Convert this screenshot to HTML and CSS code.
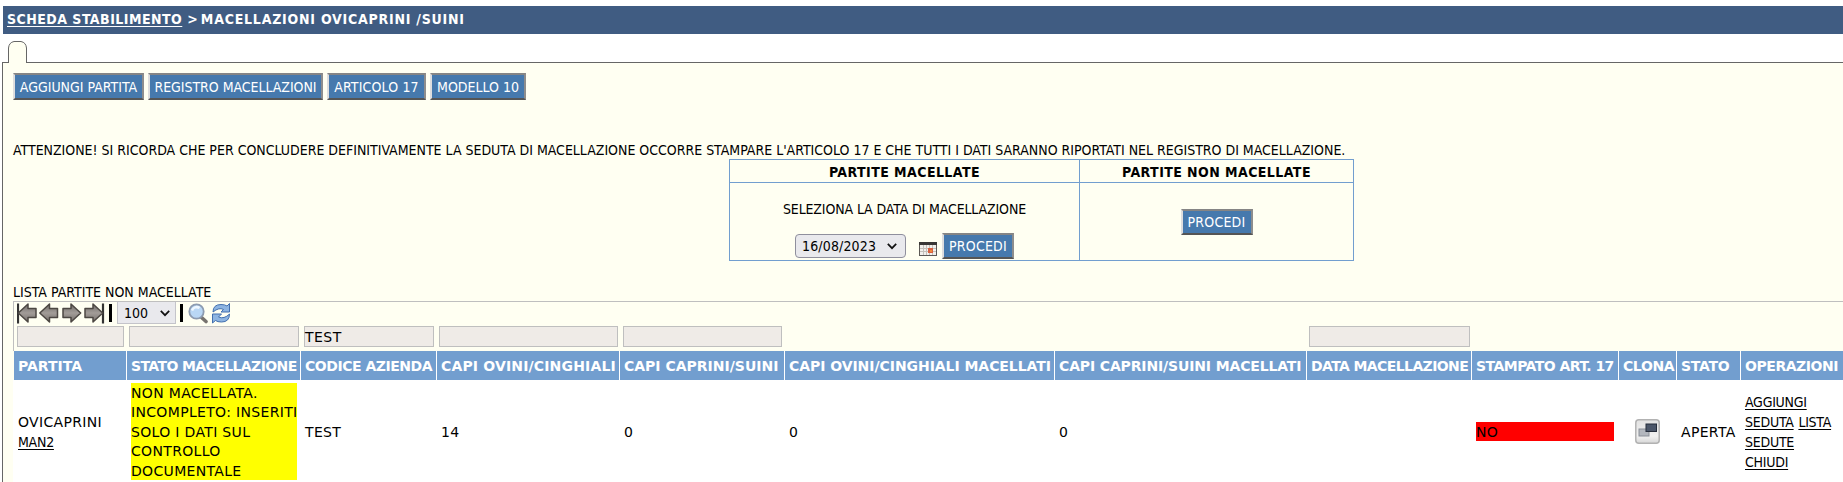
FILE: index.html
```html
<!DOCTYPE html>
<html lang="it">
<head>
<meta charset="utf-8">
<title>Macellazioni ovicaprini / suini</title>
<link rel="stylesheet" href="styles.css">
</head>
<body>
<header class="trail"><a class="trail-link" href="#">SCHEDA STABILIMENTO</a><span class="trail-sep">&gt;</span><span class="trail-here">MACELLAZIONI OVICAPRINI /SUINI</span></header>
<div class="tabs"><svg width="22" height="22" viewBox="0 0 22 22"><path d="M1.500 22V7Q2 1.500 7 .5H14Q19 1.500 19.500 7V22" fill="#fffff2" stroke="#666"/></svg></div>
<main class="panel">
  <div class="actions">
    <button class="btn w1">AGGIUNGI PARTITA</button>
    <button class="btn w2">REGISTRO MACELLAZIONI</button>
    <button class="btn w3">ARTICOLO 17</button>
    <button class="btn w4">MODELLO 10</button>
  </div>
  <p class="warning">ATTENZIONE! SI RICORDA CHE PER CONCLUDERE DEFINITIVAMENTE LA SEDUTA DI MACELLAZIONE OCCORRE STAMPARE L'ARTICOLO 17 E CHE TUTTI I DATI SARANNO RIPORTATI NEL REGISTRO DI MACELLAZIONE.</p>
  <section class="choice">
    <div class="choice-head">PARTITE MACELLATE</div>
    <div class="choice-head">PARTITE NON MACELLATE</div>
    <div class="choice-cell">
      <div class="label">SELEZIONA LA DATA DI MACELLAZIONE</div>
      <div class="date-row">
        <div class="select date">16/08/2023<svg width="10" height="7" viewBox="0 0 10 7"><path d="M.8.8 5 5.200 9.200.8" fill="none" stroke="#111" stroke-width="1.700"/></svg></div>
        <svg class="cal" width="18" height="14" viewBox="0 0 18 14"><rect x=".5" y=".5" width="17" height="13" fill="#f2f0ec" stroke="#5b5855"/><path d="M0 0h18v3H0z" fill="#393735"/><path d="M4.500 3v10M7.500 3v10M10.500 3v10M13.500 3v10M1 6.500h16M1 9.500h16" stroke="#c4c0ba"/><path d="M9 6h5v5H9z" fill="#d9603f"/><path d="M11 8h2v2h-2z" fill="#f08a3a"/></svg>
        <button class="btn go">PROCEDI</button>
      </div>
    </div>
    <div class="choice-cell right"><button class="btn go">PROCEDI</button></div>
  </section>
  <h2 class="list-title">LISTA PARTITE NON MACELLATE</h2>
  <section class="list">
    <div class="toolbar">
      <svg width="99" height="22" viewBox="0 0 99 22">
        <defs>
          <linearGradient id="g" x2="0" y2="1"><stop offset="0" stop-color="#6f6a67"/><stop offset=".5" stop-color="#a29c98"/><stop offset="1" stop-color="#77716d"/></linearGradient>
          <path id="a" d="M.8 11 10.500 2V6.500H18.500V15.500H10.500V20z" fill="url(#g)" stroke="#4c4743" stroke-width="1.500" stroke-linejoin="round"/>
        </defs>
        <path d="M1 1.500v20M86 1.500v20" stroke="#333" stroke-width="2.200"/>
        <use href="#a" x="0.500"/><use href="#a" x="22"/>
        <use href="#a" transform="translate(64.500 0) scale(-1 1)"/><use href="#a" transform="translate(86.500 0) scale(-1 1)"/>
        <path d="M93.500 2v18" stroke="#000" stroke-width="3"/>
      </svg>
      <div class="select size">100<svg width="10" height="7" viewBox="0 0 10 7"><path d="M.8.8 5 5.200 9.200.8" fill="none" stroke="#111" stroke-width="1.700"/></svg></div>
      <svg class="tools" width="52" height="22" viewBox="0 0 52 22">
        <path d="M1.500 2v18" stroke="#000" stroke-width="3"/>
        <path d="M21 15 26 19.500" stroke="#77736f" stroke-width="3.600" stroke-linecap="round"/>
        <circle cx="16.500" cy="9.500" r="7.200" fill="#b9d7f5" stroke="#8d9bb0" stroke-width="1.800"/><path d="M12 8.500A5 5 0 0 1 19.500 6" fill="none" stroke="#eef7ff" stroke-width="2.500"/>
        <path d="M33 10Q33 2.500 41 2.500 45 2.500 47 4L49.500 1.500V10H41L43.500 7.500Q39 5 33 10z" fill="#8db4e2" stroke="#436fae"/>
        <path d="M49.500 12Q49.500 20 41.500 20 37.500 20 35.500 18.500L32.500 21V12H41.500L38.500 15Q44 17.500 49.500 12z" fill="#8db4e2" stroke="#436fae"/>
      </svg>
    </div>
    <div class="grid filters">
      <div><div class="field f1"></div></div><div><div class="field f2"></div></div><div><div class="field f3">TEST</div></div><div><div class="field f4"></div></div><div><div class="field f5"></div></div><div></div><div></div><div><div class="field f8"></div></div>
    </div>
    <div class="grid heads">
      <div class="h1">PARTITA</div><div class="h2">STATO MACELLAZIONE</div><div class="h3">CODICE AZIENDA</div><div class="h4">CAPI OVINI/CINGHIALI</div><div class="h5">CAPI CAPRINI/SUINI</div><div class="h6">CAPI OVINI/CINGHIALI MACELLATI</div><div class="h7">CAPI CAPRINI/SUINI MACELLATI</div><div class="h8">DATA MACELLAZIONE</div><div class="h9">STAMPATO ART. 17</div><div class="h10">CLONA</div><div class="h11">STATO</div><div class="h12">OPERAZIONI</div>
    </div>
    <div class="grid row">
      <div class="partita">OVICAPRINI<br><a class="link" href="#">MAN2</a></div>
      <div><div class="state">NON MACELLATA.<br>INCOMPLETO: INSERITI<br>SOLO I DATI SUL<br>CONTROLLO<br>DOCUMENTALE</div></div>
      <div class="cell">TEST</div><div class="cell">14</div><div class="cell">0</div><div class="cell">0</div><div class="cell">0</div><div></div>
      <div><div class="printed">NO</div></div>
      <div class="clone"><svg width="25" height="25" viewBox="0 0 25 25"><defs><linearGradient id="c" x2="0" y2="1"><stop offset="0" stop-color="#e2e2e2"/><stop offset=".7" stop-color="#f1f1f1"/><stop offset="1" stop-color="#d7d7d7"/></linearGradient></defs><rect x=".8" y=".8" width="23.400" height="23.400" rx="3" fill="url(#c)" stroke="#b2b2b2" stroke-width="1.500"/><rect x="4" y="10" width="10" height="7" fill="#b3b7be" stroke="#8a8f98"/><rect x="11" y="5" width="10.500" height="7.500" fill="#4b5669" stroke="#252d3b"/></svg></div>
      <div class="cell">APERTA</div>
      <div class="ops"><a class="link" href="#">AGGIUNGI<br>SEDUTA</a> <a class="link" href="#">LISTA<br>SEDUTE</a><br><a class="link" href="#">CHIUDI</a></div>
    </div>
  </section>
</main>
</body>
</html>
```
FILE: styles.css
```css
* { box-sizing: border-box; }
body {
  margin: 0;
  padding: 6px 0 0 2px;
  height: 482px;
  overflow: hidden;
  background: #fff;
  color: #000;
  font: 14px/19px "DejaVu Sans Condensed", "DejaVu Sans", sans-serif;
}
a { color: inherit; text-decoration: underline; }

.trail {
  display: flex;
  height: 28px;
  margin-left: 1px;
  padding: 4px 0 0 4px;
  background: #405c82;
  color: #fff;
  font-weight: bold;
  white-space: pre;
}
.trail-link { letter-spacing: .47px; text-underline-offset: 2px; }
.trail-sep { margin: 0 3px 0 5px; }
.trail-here { letter-spacing: .77px; }

.tabs { height: 28px; padding: 7px 0 0 5px; }
.tabs svg { display: block; position: relative; z-index: 1; }
.panel {
  height: 420px;
  padding: 10px 0 0 10px;
  border-top: 1px solid #666;
  border-left: 1px solid #666;
  background: #fffff2;
}

.actions { display: flex; gap: 4px; }
.btn {
  height: 27px;
  padding: 1px 0 0;
  border: 2px solid;
  border-color: #858585 #8d8d8d #555 #dedede;
  background: #4679ad;
  color: #fff;
  font: inherit;
  white-space: nowrap;
}
.w1 { width: 131px; }
.w2 { width: 175px; letter-spacing: -.04px; }
.w3 { width: 99px; letter-spacing: .15px; }
.w4 { width: 96px; }
.go { width: 72px; height: 26px; padding: 0; letter-spacing: .2px; }

.warning { height: 19px; margin: 40px 0 0; padding-top: 1px; white-space: nowrap; letter-spacing: -.01px; }

.choice {
  display: grid;
  grid-template-columns: 350px 274px;
  grid-template-rows: 23px 78px;
  width: 625px;
  margin-left: 716px;
  border: solid #729ecf;
  border-width: 1px 0 0 1px;
}
.choice > div { border: solid #729ecf; border-width: 0 1px 1px 0; text-align: center; }
.choice > .choice-head { padding-top: 3px; font-weight: bold; letter-spacing: .43px; }
.label { margin-top: 17px; letter-spacing: -.13px; }
.date-row { display: flex; padding-left: 65px; margin-top: 14px; align-items: flex-start; }
.select { display: flex; align-items: center; background: #e9e9ed; }
.date {
  width: 111px;
  height: 24px;
  margin-top: 1px;
  padding-left: 6px;
  gap: 11px;
  border: 1px solid #8f8f9d;
  border-radius: 4px;
  letter-spacing: .15px;
}
.cal { margin: 9px 5px 0 13px; }
.right { padding-top: 26px; }

.list-title { height: 19px; margin: 21px 0 0; padding-top: 1px; font: inherit; }
.list { height: 181px; border: solid #bfbfbf; border-width: 1px 0 0; font-family: "DejaVu Sans", sans-serif; }
.toolbar { display: flex; height: 22px; padding-left: 3px; border-left: 1px solid #bfbfbf; }
.size { width: 59px; height: 22px; margin-left: 1px; padding: 1px 0 0 6px; gap: 12px; border: 1px solid #c4c4ca; border-top: 0; font: 14px/20px "DejaVu Sans Condensed", sans-serif; }
.tools { margin-left: 4px; }

.grid {
  display: grid;
  grid-template-columns: 113px 174px 136px 183px 165px 270px 252px 165px 147px 58px 64px 102px;
  padding-left: 1px;
}
.filters { height: 27px; padding: 2px 0 0; border-left: 1px solid #bfbfbf; }
.field { height: 21px; margin-left: 3px; border: 1px solid #bfbfbf; background: #efebe7; line-height: 21px; letter-spacing: .45px; }
.f1 { width: 107px; }
.f2 { width: 170px; margin-left: 2px; }
.f3 { width: 130px; }
.f4 { width: 179px; margin-left: 2px; }
.f5 { width: 159px; }
.f8 { width: 161px; margin-left: 2px; }

.heads { height: 29px; }
.heads > div {
  padding: 6px 0 0 4px;
  border-right: 1px solid #fff;
  background: #729ecf;
  color: #fff;
  font-weight: bold;
  white-space: nowrap;
}
.h2 { letter-spacing: -.6px; }
.h3 { letter-spacing: -.47px; }
.h4 { letter-spacing: .16px; }
.h6 { letter-spacing: -.05px; }
.h7 { letter-spacing: -.14px; }
.h8 { letter-spacing: -.6px; }
.h9 { letter-spacing: -.54px; }
.h10 { letter-spacing: -.4px; }
.h11 { letter-spacing: -.3px; }
.h12 { letter-spacing: -.45px; }
.heads > .h12 { border: 0; }

.row { height: 102px; align-items: center; background: #fff; letter-spacing: .33px; white-space: nowrap; }
.row > div { padding-left: 4px; }
.row > .cell { padding-top: 2px; }
.state { width: 166px; height: 97px; margin-top: 1px; padding-top: 1px; background: #ff0; line-height: 19.400px; }
.printed { width: 138px; height: 19px; margin-top: 1px; background: #f00; line-height: 20px; }
.clone svg { display: block; margin: 1px 0 0 12px; }
.link { font-family: "DejaVu Sans Condensed", sans-serif; letter-spacing: -.25px; text-underline-offset: 2px; }
.row > .partita, .row > .ops { padding-top: 2px; line-height: 20px; }
```
